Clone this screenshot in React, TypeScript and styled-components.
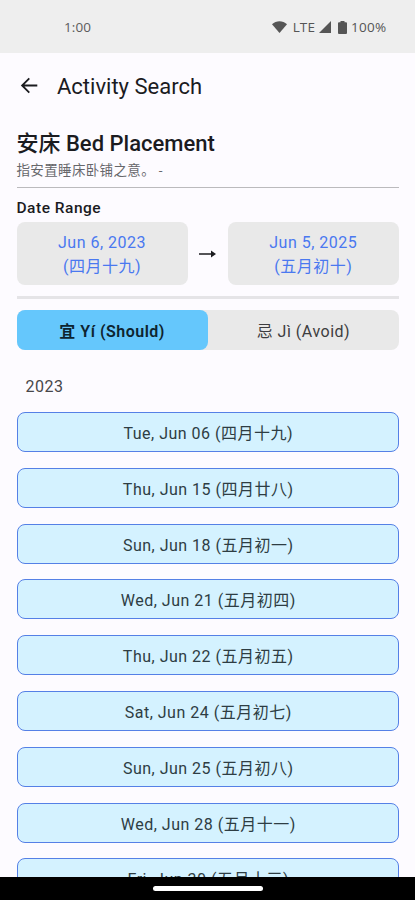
import React from 'react';
import styled, { createGlobalStyle, css } from 'styled-components';

const Global = createGlobalStyle`
  * { box-sizing: border-box; }
  html, body { margin: 0; padding: 0; background: #fdfbff; }
  body {
    font-family: Roboto, "Noto Sans CJK SC", sans-serif;
    color: #1b1b1f;
    overflow: hidden;
  }
  button { font: inherit; color: inherit; border: 0; padding: 0; margin: 0; }
`;

const Screen = styled.div`
  width: 415px;
  height: 900px;
  display: flex;
  flex-direction: column;
  overflow: hidden;
  background: #fdfbff;
`;

const StatusBar = styled.header`
  flex: none;
  height: 53px;
  padding: 1px 28px 0 64px;
  display: flex;
  align-items: center;
  justify-content: space-between;
  background: #eeeeee;
  color: #5c5c5c;
  font-family: "Open Sans", Roboto, sans-serif;
  font-size: 13.5px;
  line-height: 18px;
`;

const Clock = styled.span`
  letter-spacing: 0.1px;
`;

const StatusIcons = styled.div`
  display: flex;
  align-items: center;
  color: #555555;

  svg { display: block; flex: none; }
`;

const Network = styled.span`
  margin: 0 4px 0 6px;
  letter-spacing: 0.1px;
`;

const BatteryLevel = styled.span`
  width: 36px;
  margin-left: 4px;
  letter-spacing: 0.3px;
`;

const BatterySlot = styled.span`
  margin-left: 7px;
`;

const TitleBar = styled.div`
  flex: none;
  height: 66px;
  padding-left: 19px;
  display: flex;
  align-items: center;
  gap: 18px;

  svg { display: block; }
`;

const Title = styled.h1`
  margin: 1px 0 0;
  font-size: 22px;
  line-height: 28px;
  font-weight: 400;
`;

const Content = styled.main`
  flex: 1;
  min-height: 0;
  overflow: hidden;
  padding: 11px 16px 0 16.5px;
  display: flex;
  flex-direction: column;
`;

const ActivityName = styled.h2`
  flex: none;
  margin: 0;
  font-size: 22px;
  line-height: 28px;
  font-weight: 500;
`;

const Description = styled.p`
  flex: none;
  margin: 3px 0 7px;
  font-size: 13.5px;
  line-height: 19px;
  letter-spacing: 0.35px;
  color: #67676b;
`;

const Rule = styled.div<{ $thick?: boolean }>`
  flex: none;
  height: ${p => (p.$thick ? 3 : 1)}px;
  background: ${p => (p.$thick ? '#e5e4e7' : '#bbbabd')};
`;

const Label = styled.div`
  flex: none;
  margin-top: 10px;
  font-size: 15.5px;
  line-height: 20px;
  font-weight: 500;
  letter-spacing: 0.5px;
`;

const RangeRow = styled.div`
  flex: none;
  margin: 4px 0 11px;
  display: grid;
  grid-template-columns: 171px 1fr 171.5px;
  align-items: center;

  svg { display: block; justify-self: center; }
`;

const DateButton = styled.button`
  height: 63px;
  padding-top: 2px;
  border-radius: 8px;
  background: #e9e9e9;
  color: #4a78f0;
  font-size: 16px;
  line-height: 24px;
  letter-spacing: 0.5px;

  span { display: block; }
`;

const Tabs = styled.div`
  flex: none;
  height: 40px;
  margin-top: 11px;
  display: flex;
  border-radius: 8px;
  background: #e9e9e9;
`;

const Tab = styled.button<{ $active?: boolean }>`
  flex: 1;
  border-radius: 8px;
  background: transparent;
  color: #3d3d40;
  font-size: 16px;
  letter-spacing: 0.5px;
  ${p => p.$active && css`
    background: #65c7fc;
    color: #0d2430;
    font-weight: 600;
  `}
`;

const Year = styled.div`
  flex: none;
  margin: 26px 0 14px 9px;
  font-size: 16px;
  line-height: 22px;
  letter-spacing: 0.5px;
  color: #47474a;
`;

const DayList = styled.div`
  display: flex;
  flex-direction: column;
  gap: 15.8px;
`;

const Day = styled.button`
  flex: none;
  height: 40px;
  border: 1.5px solid #5580e6;
  border-radius: 8px;
  background: #d4f2ff;
  color: #2e3d43;
  font-size: 16px;
  line-height: 24px;
  letter-spacing: 0.5px;
  padding: 4px 0 0 1px;
`;

const NavBar = styled.footer`
  flex: none;
  height: 23px;
  padding-top: 9px;
  display: flex;
  justify-content: center;
  background: #000;
`;

const Handle = styled.div`
  width: 110px;
  height: 5px;
  border-radius: 2.5px;
  background: #fff;
`;

const days = [
  'Tue, Jun 06 (四月十九)',
  'Thu, Jun 15 (四月廿八)',
  'Sun, Jun 18 (五月初一)',
  'Wed, Jun 21 (五月初四)',
  'Thu, Jun 22 (五月初五)',
  'Sat, Jun 24 (五月初七)',
  'Sun, Jun 25 (五月初八)',
  'Wed, Jun 28 (五月十一)',
  'Fri, Jun 30 (五月十三)',
];

const WifiIcon = () => (
  <svg width="15" height="12" viewBox="0 0 15 12" fill="currentColor">
    <path d="M0 3.2C4.2-.8 10.8-.8 15 3.2L7.5 12z" />
  </svg>
);

const SignalIcon = () => (
  <svg width="12" height="12" viewBox="0 0 12 12" fill="currentColor">
    <path d="M12 0v12H0z" />
  </svg>
);

const BatteryIcon = () => (
  <svg width="9" height="13" viewBox="0 0 9 13" fill="currentColor">
    <path d="M2.5 0h4v1.3H8q1 0 1 1V12q0 1-1 1H1q-1 0-1-1V2.3q0-1 1-1h1.5z" />
  </svg>
);

const BackIcon = () => (
  <svg width="20" height="20" viewBox="0 0 20 20" fill="none" stroke="#1b1b1f" strokeWidth="1.8">
    <path d="M18.3 9.5H3.5M10.3 2.3L3.1 9.5l7.2 7.2" />
  </svg>
);

const RangeArrow = () => (
  <svg width="17" height="8" viewBox="0 0 17 8">
    <path d="M0 4h13" stroke="#1b1b1f" strokeWidth="1.5" />
    <path d="M12 .5L17 4l-5 3.5z" fill="#1b1b1f" />
  </svg>
);

export default function App() {
  return (
    <>
      <Global />
      <Screen>
        <StatusBar>
          <Clock>1:00</Clock>
          <StatusIcons>
            <WifiIcon />
            <Network>LTE</Network>
            <SignalIcon />
            <BatterySlot>
              <BatteryIcon />
            </BatterySlot>
            <BatteryLevel>100%</BatteryLevel>
          </StatusIcons>
        </StatusBar>
        <TitleBar>
          <BackIcon />
          <Title>Activity Search</Title>
        </TitleBar>
        <Content>
          <ActivityName>安床 Bed Placement</ActivityName>
          <Description>指安置睡床卧铺之意。 -</Description>
          <Rule />
          <Label>Date Range</Label>
          <RangeRow>
            <DateButton>
              <span>Jun 6, 2023</span>
              <span>(四月十九)</span>
            </DateButton>
            <RangeArrow />
            <DateButton>
              <span>Jun 5, 2025</span>
              <span>(五月初十)</span>
            </DateButton>
          </RangeRow>
          <Rule $thick />
          <Tabs>
            <Tab $active>宜 Yí (Should)</Tab>
            <Tab>忌 Jì (Avoid)</Tab>
          </Tabs>
          <Year>2023</Year>
          <DayList>
            {days.map(day => (
              <Day key={day}>{day}</Day>
            ))}
          </DayList>
        </Content>
        <NavBar>
          <Handle />
        </NavBar>
      </Screen>
    </>
  );
}
